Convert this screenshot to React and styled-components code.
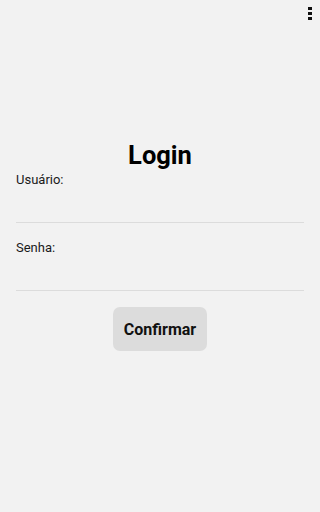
import React from "react";
import styled, { createGlobalStyle } from "styled-components";

const GlobalStyle = createGlobalStyle`
  html, body {
    margin: 0;
    padding: 0;
    background: #f2f2f2;
  }
  body {
    font-family: Roboto, "Liberation Sans", sans-serif;
    color: #111;
  }
`;

const Screen = styled.div`
  width: 320px;
  min-height: 512px;
  background: #f2f2f2;
  display: flex;
  flex-direction: column;
`;

const TopBar = styled.div`
  height: 24px;
  display: flex;
  justify-content: flex-end;
  align-items: flex-start;
  padding: 7px 7px 0 0;
  box-sizing: border-box;
`;

const MenuButton = styled.button`
  background: none;
  border: none;
  padding: 0;
  width: 6px;
  height: 13px;
  display: flex;
  cursor: pointer;
`;

const Form = styled.form`
  display: flex;
  flex-direction: column;
  padding: 116px 16px 0;
`;

const Title = styled.h1`
  margin: 0 0 2px;
  font-size: 25.5px;
  line-height: 30px;
  font-weight: 700;
  text-align: center;
  color: #000;
`;

const Label = styled.label`
  font-size: 13px;
  line-height: 16px;
  color: #1a1a1a;
  margin-top: ${(p) => p.$gap || 0}px;
`;

const Input = styled.input`
  height: 35px;
  border: none;
  border-bottom: 1px solid #dcdcdc;
  background: transparent;
  font-family: inherit;
  font-size: 14px;
  padding: 0;
  outline: none;
  box-sizing: border-box;
`;

const Actions = styled.div`
  display: flex;
  justify-content: center;
  margin-top: 16px;
`;

const Button = styled.button`
  width: 94px;
  height: 44px;
  border: none;
  border-radius: 7px;
  background: #dcdcdc;
  font-family: inherit;
  font-size: 16px;
  font-weight: 700;
  color: #111;
  cursor: pointer;
`;

const DotsIcon = () => (
  <svg width="6" height="13" viewBox="0 0 6 13">
    <rect x="1" y="0" width="4" height="3" fill="#111" />
    <rect x="1" y="5" width="4" height="3" fill="#111" />
    <rect x="1" y="10" width="4" height="3" fill="#111" />
  </svg>
);

export default function App() {
  return (
    <>
      <GlobalStyle />
      <Screen>
        <TopBar>
          <MenuButton aria-label="Menu">
            <DotsIcon />
          </MenuButton>
        </TopBar>
        <Form onSubmit={(e) => e.preventDefault()}>
          <Title>Login</Title>
          <Label htmlFor="user">Usuário:</Label>
          <Input id="user" type="text" />
          <Label htmlFor="pass" $gap={17}>Senha:</Label>
          <Input id="pass" type="password" />
          <Actions>
            <Button type="submit">Confirmar</Button>
          </Actions>
        </Form>
      </Screen>
    </>
  );
}
